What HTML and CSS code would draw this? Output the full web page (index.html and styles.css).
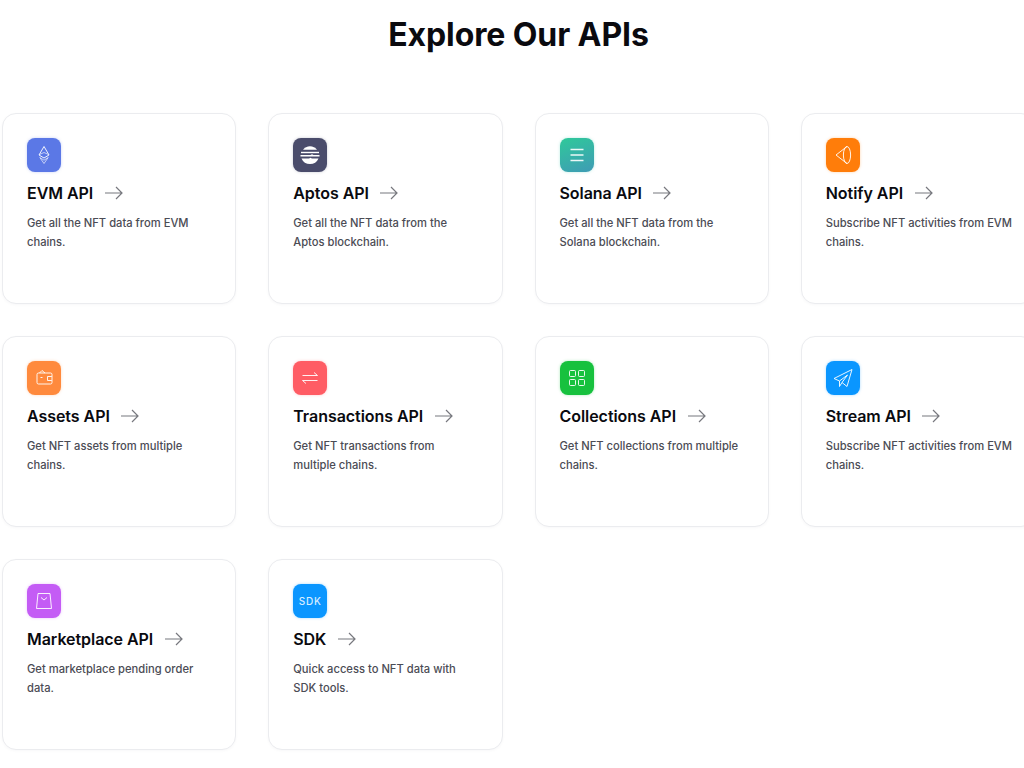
FILE: index.html
```html
<!DOCTYPE html>
<html lang="en">
<head>
<meta charset="utf-8">
<title>Explore Our APIs</title>
<link rel="stylesheet" href="styles.css">
</head>
<body>
<main class="page">
  <h1 class="title">Explore Our APIs</h1>
  <div class="grid">
    <a class="card">
      <span class="icon i-evm"><svg viewBox="0 0 34 34" class="glyph"><path d="M17 8.500 12 17 17 20 22 17Z"/><path d="M12.500 16.500 17 14.500 21.500 16.500" opacity=".7"/><path d="M12.800 19.500 17 25.500 21.200 19.500 17 22.200Z" opacity=".7"/></svg></span>
      <h2 class="name">EVM API<svg class="arrow" viewBox="0 0 18 14"><path d="M0 7H17M11 1l6 6-6 6"/></svg></h2>
      <p class="desc">Get all the NFT data from EVM chains.</p>
    </a>
    <a class="card">
      <span class="icon i-aptos"><svg viewBox="0 0 34 34" class="glyph solid"><path d="M10 11.800A8.800 8.800 0 0 1 24 11.800Z"/><path d="M8 13.800H26V15.200H8Z"/><path d="M7.500 17H17.500L19 16.300 20.500 17H26.500V18.500H7.500Z"/><path d="M8.500 20.400H16L17.500 19.700 19 20.400H25.500A9.300 9.300 0 0 1 8.500 20.400Z"/></svg></span>
      <h2 class="name">Aptos API<svg class="arrow" viewBox="0 0 18 14"><path d="M0 7H17M11 1l6 6-6 6"/></svg></h2>
      <p class="desc">Get all the NFT data from the Aptos blockchain.</p>
    </a>
    <a class="card">
      <span class="icon i-solana"><svg viewBox="0 0 34 34" class="glyph"><path d="M10.500 11.500H23.500M10.500 17H23.500M10.500 22.500H23.500" stroke-width="1.500"/></svg></span>
      <h2 class="name">Solana API<svg class="arrow" viewBox="0 0 18 14"><path d="M0 7H17M11 1l6 6-6 6"/></svg></h2>
      <p class="desc">Get all the NFT data from the Solana blockchain.</p>
    </a>
    <a class="card">
      <span class="icon i-notify"><svg viewBox="0 0 34 34" class="glyph"><path d="M21 8.500 10 17 21 25.500"/><ellipse cx="21" cy="17" rx="3.600" ry="8.500"/></svg></span>
      <h2 class="name">Notify API<svg class="arrow" viewBox="0 0 18 14"><path d="M0 7H17M11 1l6 6-6 6"/></svg></h2>
      <p class="desc">Subscribe NFT activities from EVM chains.</p>
    </a>
    <a class="card">
      <span class="icon i-assets"><svg viewBox="0 0 34 34" class="glyph"><rect x="10" y="12" width="15" height="11" rx="1.500"/><path d="M12.500 12 15 9.500 18 12M24.800 15.500H20.500V19.500H24.800"/><path d="M13.500 16.500H15.500"/></svg></span>
      <h2 class="name">Assets API<svg class="arrow" viewBox="0 0 18 14"><path d="M0 7H17M11 1l6 6-6 6"/></svg></h2>
      <p class="desc">Get NFT assets from multiple chains.</p>
    </a>
    <a class="card">
      <span class="icon i-trans"><svg viewBox="0 0 34 34" class="glyph"><path d="M9.500 14.500H24.500L21 11.500"/><path d="M24.500 19.500H9.500L13 22.500"/></svg></span>
      <h2 class="name">Transactions API<svg class="arrow" viewBox="0 0 18 14"><path d="M0 7H17M11 1l6 6-6 6"/></svg></h2>
      <p class="desc">Get NFT transactions from<br>multiple chains.</p>
    </a>
    <a class="card">
      <span class="icon i-coll"><svg viewBox="0 0 34 34" class="glyph"><rect x="9.500" y="9.500" width="6" height="6" rx="1"/><rect x="18.500" y="9.500" width="6" height="6" rx="1"/><rect x="9.500" y="18.500" width="6" height="6" rx="1"/><rect x="18.500" y="18.500" width="6" height="6" rx="1"/></svg></span>
      <h2 class="name">Collections API<svg class="arrow" viewBox="0 0 18 14"><path d="M0 7H17M11 1l6 6-6 6"/></svg></h2>
      <p class="desc">Get NFT collections from multiple chains.</p>
    </a>
    <a class="card">
      <span class="icon i-stream"><svg viewBox="0 0 34 34" class="glyph"><path d="M26 8.500 8 17.500 13.500 20 21.500 14 16 21.500 21 25.500Z"/><path d="M13.500 20V25.500L16 21.500"/></svg></span>
      <h2 class="name">Stream API<svg class="arrow" viewBox="0 0 18 14"><path d="M0 7H17M11 1l6 6-6 6"/></svg></h2>
      <p class="desc">Subscribe NFT activities from EVM chains.</p>
    </a>
    <a class="card">
      <span class="icon i-market"><svg viewBox="0 0 34 34" class="glyph"><path d="M11 9.500H23L24.500 24.500H9.500Z" stroke-linejoin="round"/><path d="M14 13.500 17 16 20 13.500"/></svg></span>
      <h2 class="name">Marketplace API<svg class="arrow" viewBox="0 0 18 14"><path d="M0 7H17M11 1l6 6-6 6"/></svg></h2>
      <p class="desc">Get marketplace pending order data.</p>
    </a>
    <a class="card">
      <span class="icon i-sdk"><span class="sdk">SDK</span></span>
      <h2 class="name">SDK<svg class="arrow" viewBox="0 0 18 14"><path d="M0 7H17M11 1l6 6-6 6"/></svg></h2>
      <p class="desc">Quick access to NFT data with SDK tools.</p>
    </a>
  </div>
</main>
</body>
</html>
```
FILE: styles.css
```css
* { box-sizing: border-box; }
html, body { margin: 0; height: 768px; overflow: hidden; background: #fff; }
body { font-family: Inter, "Liberation Sans", sans-serif; color: #0a0a0f; }
.page { width: 1033px; margin-left: 2px; padding-top: 15px; }
.title { margin: 0 0 58px; font-size: 32px; line-height: 40px; font-weight: 700; text-align: center; letter-spacing: -0.1px; }
.grid { display: grid; grid-template-columns: repeat(4, 1fr); grid-auto-rows: 191px; gap: 32px; }
.card { display: block; padding: 24px 21px 24px 24px; border: 1px solid #ebecef; border-radius: 14px; background: #fff; box-shadow: 0 1px 3px rgba(20, 30, 60, 0.03); }
.icon { display: flex; align-items: center; justify-content: center; width: 34px; height: 34px; border-radius: 8px; }
.glyph { width: 34px; height: 34px; fill: none; stroke: rgba(255, 255, 255, 0.9); stroke-width: 1; }
.glyph.solid { fill: #fff; stroke: none; }
.i-evm { background: #5b78e6; box-shadow: 0 0 3px rgba(91, 120, 230, 0.35); }
.i-aptos { background: #4a4c6b; box-shadow: 0 0 3px rgba(74, 76, 107, 0.3); }
.i-solana { background: linear-gradient(160deg, #2fc99a, #3f9bb5); box-shadow: 0 0 3px rgba(47, 201, 170, 0.35); }
.i-notify { background: #ff7d0a; box-shadow: 0 0 3px rgba(255, 125, 10, 0.35); }
.i-assets { background: #ff8a3d; box-shadow: 0 0 3px rgba(255, 138, 61, 0.35); }
.i-trans { background: #ff5c64; box-shadow: 0 0 3px rgba(255, 92, 100, 0.35); }
.i-coll { background: #17c13e; box-shadow: 0 0 3px rgba(23, 193, 62, 0.35); }
.i-stream { background: #0a96ff; box-shadow: 0 0 3px rgba(10, 150, 255, 0.35); }
.i-market { background: #c45cf5; box-shadow: 0 0 3px rgba(196, 92, 245, 0.35); }
.i-sdk { background: #0a96ff; box-shadow: 0 0 3px rgba(10, 150, 255, 0.35); }
.sdk { color: rgba(255, 255, 255, 0.85); font-size: 10px; font-weight: 500; letter-spacing: 0.8px; }
.name { display: flex; align-items: center; margin: 9px 0 0; font-size: 16px; line-height: 24px; font-weight: 600; white-space: nowrap; letter-spacing: -0.05px; }
.arrow { width: 18px; height: 14px; margin-left: 11.5px; fill: none; stroke: #77787e; stroke-width: 1.2; }
.desc { margin: 9px 0 0; font-size: 11.2px; line-height: 19px; font-weight: 500; color: #4b4c55; }
```
